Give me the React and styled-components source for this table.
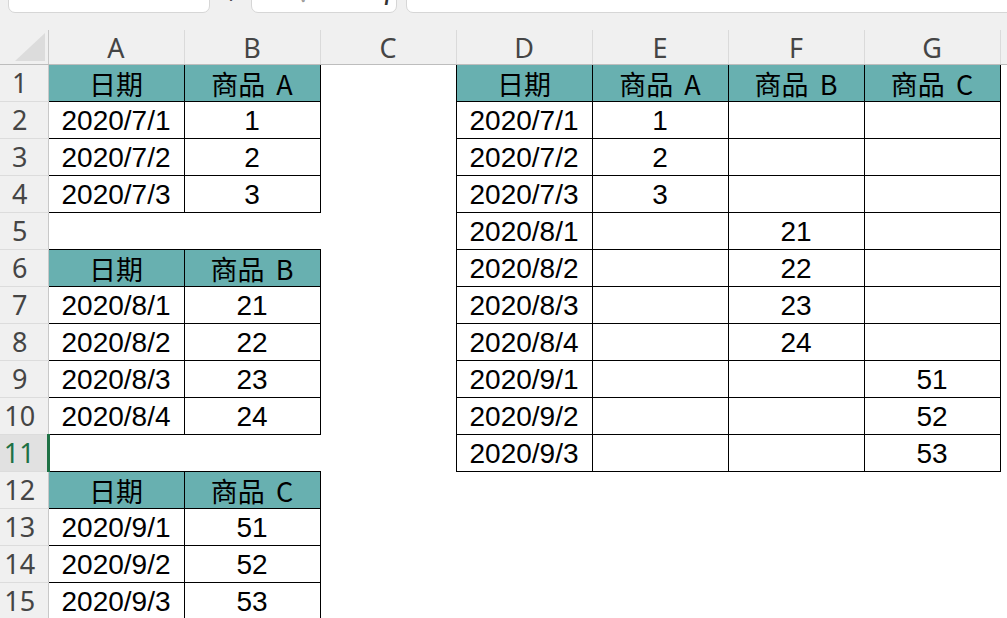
import React from "react";
import styled, { createGlobalStyle } from "styled-components";

const Global = createGlobalStyle`
  html, body { margin: 0; padding: 0; background: #f0f0f0; overflow: hidden; }
  body { width: 1007px; height: 618px; font-family: "Liberation Sans", "Noto Sans CJK SC", sans-serif; }
`;

const Page = styled.div`
  width: 1007px;
  height: 618px;
  overflow: hidden;
  display: flex;
  flex-direction: column;
  background: #f0f0f0;
`;

const FormulaBar = styled.div`
  height: 30px;
  flex: none;
  display: flex;
  align-items: flex-start;
  overflow: hidden;
`;

const Box = styled.div`
  flex: ${(p) => (p.$grow ? "1" : "none")};
  width: ${(p) => (p.$w ? `${p.$w}px` : "auto")};
  margin-left: ${(p) => p.$ml || 0}px;
  margin-right: ${(p) => (p.$grow ? "-20px" : "0")};
  height: 40px;
  margin-top: -27px;
  background: #fff;
  border: 1px solid #d6d6d6;
  border-radius: 7px;
  box-sizing: border-box;
  display: flex;
  align-items: center;
  gap: 22px;
  padding-left: 8px;
  color: #9a9a9a;
  font-size: 20px;
`;

const Dots = styled.div`
  width: 41px;
  flex: none;
  text-align: center;
  margin-top: -18px;
  font-size: 20px;
  color: #555;
  line-height: 20px;
`;

const Fx = styled.span`
  font-family: "Liberation Serif", serif;
  font-style: italic;
  color: #333;
  font-weight: bold;
  margin-left: 50px;
`;

const SheetWrap = styled.div`
  flex: 1;
  overflow: hidden;
  background: #fff;
`;

const Sheet = styled.table`
  border-collapse: collapse;
  table-layout: fixed;
  width: 1136px;
  background: #fff;
`;

const ColHead = styled.th`
  height: 34px;
  padding: 3px 0 0;
  background: #f0f0f0;
  border-right: 1px solid #dadada;
  border-bottom: 1px solid #bdbdbd;
  font-family: "Noto Sans", "Liberation Sans", sans-serif;
  font-weight: 400;
  font-size: 27px;
  line-height: 30px;
  color: #454545;
  text-align: center;
  box-sizing: border-box;
  &:last-child { border-right: none; }
`;

const Corner = styled.th`
  background: #f0f0f0;
  border-right: 1px solid #c8c8c8;
  border-bottom: 1px solid #bdbdbd;
  padding: 0;
  position: relative;
  &::after {
    content: "";
    position: absolute;
    right: 3px;
    bottom: 3px;
    width: 0;
    height: 0;
    border-left: 30px solid transparent;
    border-bottom: 28px solid #dcdcdc;
  }
`;

const Row = styled.tr`
  height: 37px;
`;

const RowHead = styled.th`
  padding: 0 8px 0 0;
  background: ${(p) => (p.$active ? "#e1e1e1" : "#f0f0f0")};
  color: ${(p) => (p.$active ? "#1e7145" : "#454545")};
  border-bottom: 1px solid #dcdcdc;
  border-right: ${(p) => (p.$active ? "3px solid #1e7145" : "1px solid #c8c8c8")};
  font-family: "Noto Sans", "Liberation Sans", sans-serif;
  font-weight: 400;
  font-size: 27px;
  line-height: 36px;
  text-align: center;
  white-space: nowrap;
`;

const Cell = styled.td`
  padding: ${(p) => (p.$head ? "2px 0 0" : "3px 0 0")};
  height: 37px;
  box-sizing: border-box;
  text-align: center;
  white-space: nowrap;
  overflow: hidden;
  color: #000;
  font-family: ${(p) =>
    p.$head ? `"Noto Sans CJK SC", sans-serif` : `"Liberation Sans", "Noto Sans CJK SC", sans-serif`};
  font-size: ${(p) => (p.$head ? "27px" : "28px")};
  word-spacing: ${(p) => (p.$head ? "5px" : "0")};
  line-height: 32px;
  background: ${(p) => (p.$head ? "#68b0b0" : "#fff")};
  border: ${(p) => (p.$b ? "1px solid #000" : "none")};
`;

const H = (t) => ({ t, head: true, b: true });
const D = (t = "") => ({ t, b: true });
const E = { t: "", b: false };

const rows = [
  [H("日期"), H("商品 A"), E, H("日期"), H("商品 A"), H("商品 B"), H("商品 C")],
  [D("2020/7/1"), D("1"), E, D("2020/7/1"), D("1"), D(), D()],
  [D("2020/7/2"), D("2"), E, D("2020/7/2"), D("2"), D(), D()],
  [D("2020/7/3"), D("3"), E, D("2020/7/3"), D("3"), D(), D()],
  [E, E, E, D("2020/8/1"), D(), D("21"), D()],
  [H("日期"), H("商品 B"), E, D("2020/8/2"), D(), D("22"), D()],
  [D("2020/8/1"), D("21"), E, D("2020/8/3"), D(), D("23"), D()],
  [D("2020/8/2"), D("22"), E, D("2020/8/4"), D(), D("24"), D()],
  [D("2020/8/3"), D("23"), E, D("2020/9/1"), D(), D(), D("51")],
  [D("2020/8/4"), D("24"), E, D("2020/9/2"), D(), D(), D("52")],
  [E, E, E, D("2020/9/3"), D(), D(), D("53")],
  [H("日期"), H("商品 C"), E, E, E, E, E],
  [D("2020/9/1"), D("51"), E, E, E, E, E],
  [D("2020/9/2"), D("52"), E, E, E, E, E],
  [D("2020/9/3"), D("53"), E, E, E, E, E],
];

const cols = ["A", "B", "C", "D", "E", "F", "G", "H"];

export default function App() {
  return (
    <Page>
      <Global />
      <FormulaBar>
        <Box $w={202} $ml={8} />
        <Dots>⋮</Dots>
        <Box $w={146}>
          <span>✕</span>
          <span>✓</span>
          <Fx>fx</Fx>
        </Box>
        <Box $grow $ml={9} />
      </FormulaBar>
      <SheetWrap>
        <Sheet>
          <colgroup>
            <col style={{ width: 48 }} />
            {cols.map((c) => (
              <col key={c} style={{ width: 136 }} />
            ))}
          </colgroup>
          <thead>
            <tr>
              <Corner />
              {cols.map((c) => (
                <ColHead key={c}>{c}</ColHead>
              ))}
            </tr>
          </thead>
          <tbody>
            {rows.map((r, i) => (
              <Row key={i}>
                <RowHead $active={i === 10}>{i + 1}</RowHead>
                {r.map((c, j) => (
                  <Cell key={j} $head={c.head} $b={c.b}>
                    {c.t}
                  </Cell>
                ))}
                <Cell />
              </Row>
            ))}
          </tbody>
        </Sheet>
      </SheetWrap>
    </Page>
  );
}
